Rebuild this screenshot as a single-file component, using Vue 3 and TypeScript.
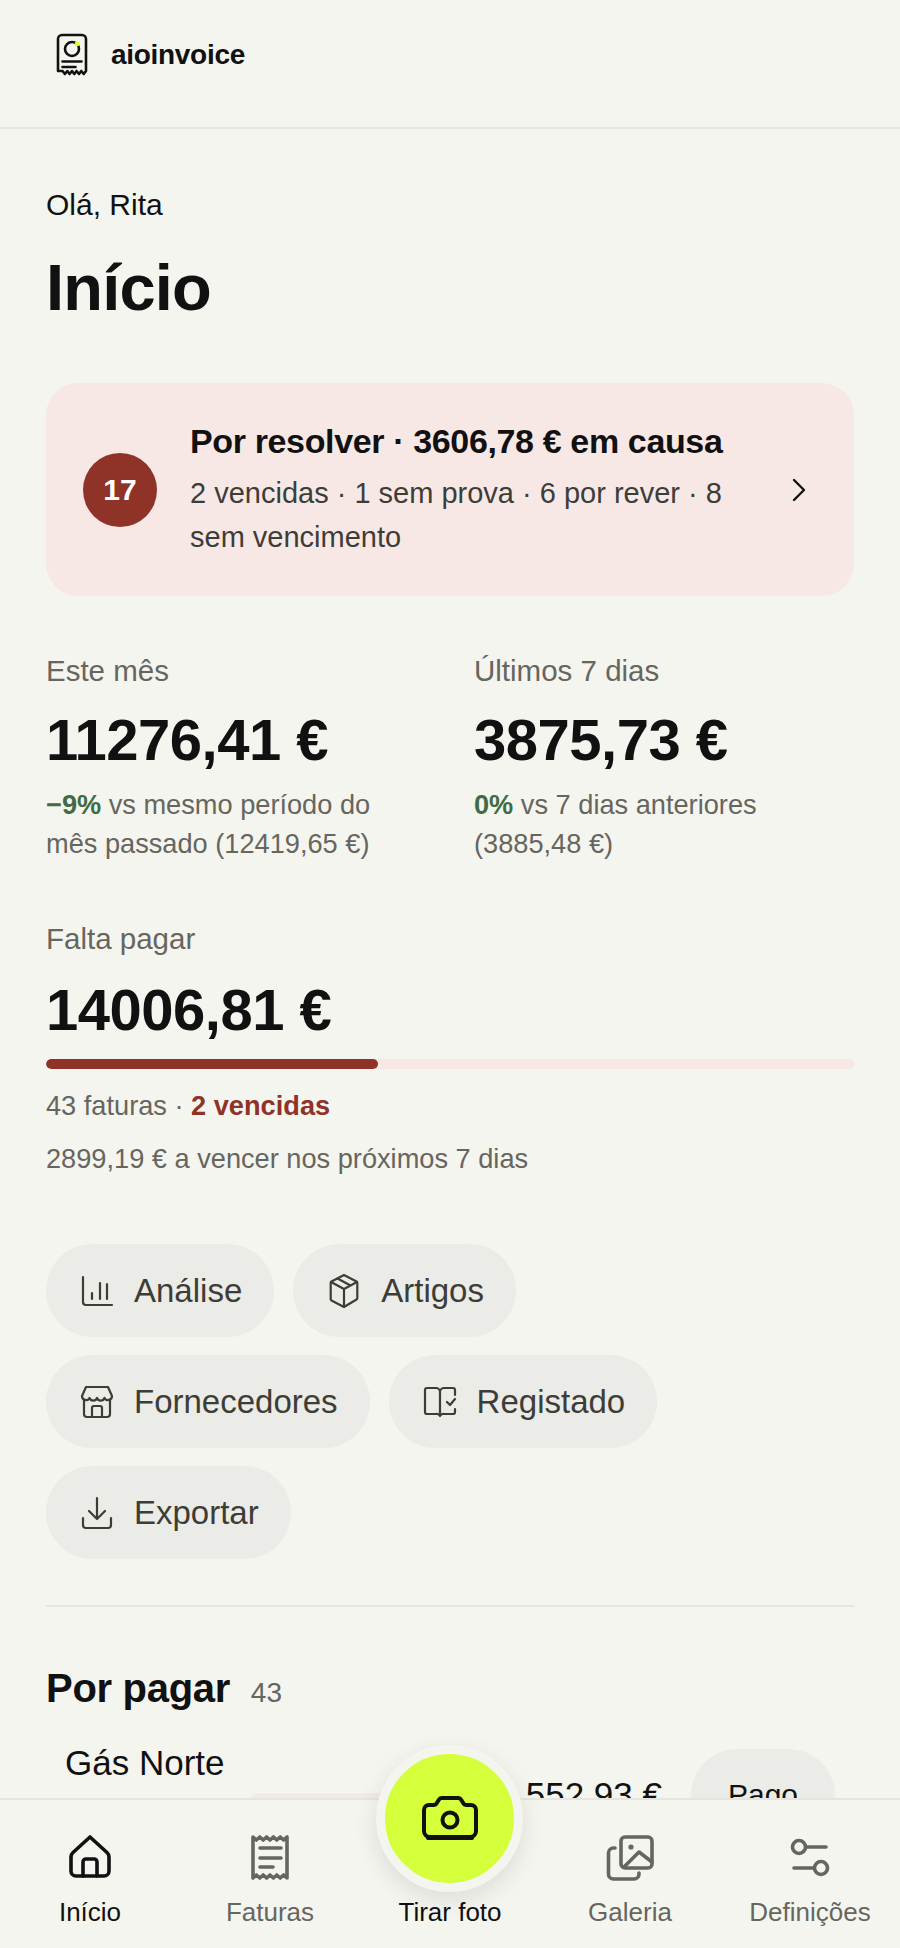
<script setup lang="ts">
const greeting: string = 'Olá, Rita'
</script>

<template>
  <div class="app">
    <header class="topbar">
      <svg class="logo" width="36" height="48" viewBox="0 0 36 48" fill="none" stroke="#111" stroke-width="2.600" stroke-linecap="round" stroke-linejoin="round">
        <path d="M4 40V8a4 4 0 0 1 4-4h20a4 4 0 0 1 4 4v32l-2.300 3-2.400-3-2.300 3-2.400-3-2.300 3-2.300-3-2.400 3-2.300-3-2.400 3-2.300-3z"/>
        <circle cx="18" cy="18" r="7"/>
        <path d="M8.500 30.500h19M8.500 36h13"/>
        <circle cx="23" cy="13" r="2.400" fill="#d4ff3a" stroke="none"/>
      </svg>
      <span class="brand">aioinvoice</span>
    </header>

    <main class="main">
      <p class="hello">{{ greeting }}</p>
      <h1 class="title">Início</h1>

      <section class="alert">
        <span class="alert-badge">17</span>
        <div class="alert-text">
          <div class="alert-title">Por resolver · 3606,78 € em causa</div>
          <div class="alert-sub">2 vencidas · 1 sem prova · 6 por rever · 8 sem vencimento</div>
        </div>
        <svg class="chev" width="16" height="26" viewBox="0 0 16 26" fill="none" stroke="#111" stroke-width="2.400" stroke-linecap="round" stroke-linejoin="round"><path d="M3 3l10 10-10 10"/></svg>
      </section>

      <section class="stats">
        <div>
          <div class="label">Este mês</div>
          <div class="value">11276,41 €</div>
          <div class="note"><b class="good">−9%</b> vs mesmo período do mês passado (12419,65 €)</div>
        </div>
        <div>
          <div class="label">Últimos 7 dias</div>
          <div class="value">3875,73 €</div>
          <div class="note"><b class="good">0%</b> vs 7 dias anteriores (3885,48 €)</div>
        </div>
      </section>

      <section class="due">
        <div class="label">Falta pagar</div>
        <div class="value">14006,81 €</div>
        <div class="track"><div class="fill"></div></div>
        <div class="note due-a">43 faturas · <b class="bad">2 vencidas</b></div>
        <div class="note due-b">2899,19 € a vencer nos próximos 7 dias</div>
      </section>

      <section class="actions">
        <button class="pill">
          <svg viewBox="-1 -2 34 36" fill="none" stroke="#3d3d38" stroke-width="2.200" stroke-linecap="round" stroke-linejoin="round"><path d="M2 2v25a3 3 0 0 0 3 3h26"/><path d="M11 18v6M19 8v16M26 9v15"/></svg>
          <span>Análise</span>
        </button>
        <button class="pill">
          <svg viewBox="-1 0 34 36" fill="none" stroke="#3d3d38" stroke-width="2.200" stroke-linecap="round" stroke-linejoin="round"><path d="M16 2l12.500 6.500a1.500 1.500 0 0 1 .8 1.300v15.400a1.500 1.500 0 0 1-.8 1.300L16 34 3.500 27.500a1.500 1.500 0 0 1-.8-1.300V9.800a1.500 1.500 0 0 1 .8-1.300z"/><path d="M3 9l13 7 13-7M16 16v18M9.500 5.500l13 7"/></svg>
          <span>Artigos</span>
        </button>
        <button class="pill">
          <svg viewBox="0 -1 34 36" fill="none" stroke="#3d3d38" stroke-width="2.200" stroke-linecap="round" stroke-linejoin="round"><path d="M6 2h22l4 9a4 4 0 0 1-7.500 2 4 4 0 0 1-7.500 0 4 4 0 0 1-7.500 0A4 4 0 0 1 2 11z"/><path d="M4 15v14a3 3 0 0 0 3 3h20a3 3 0 0 0 3-3V15"/><path d="M12 32V23a2 2 0 0 1 2-2h6a2 2 0 0 1 2 2v9"/></svg>
          <span>Fornecedores</span>
        </button>
        <button class="pill">
          <svg viewBox="0 -1 34 36" fill="none" stroke="#3d3d38" stroke-width="2.200" stroke-linecap="round" stroke-linejoin="round"><path d="M17 31V7a4 4 0 0 0-4-4H4a2 2 0 0 0-2 2v22a2 2 0 0 0 2 2h9a4 4 0 0 1 4 2 4 4 0 0 1 4-2h9a2 2 0 0 0 2-2v-3M32 10V5a2 2 0 0 0-2-2h-9a4 4 0 0 0-4 4"/><path d="M24 17l3 3 5-6"/></svg>
          <span>Registado</span>
        </button>
        <button class="pill">
          <svg viewBox="-1 -1 34 36" fill="none" stroke="#3d3d38" stroke-width="2.200" stroke-linecap="round" stroke-linejoin="round"><path d="M16 2v20M8 15l8 8 8-8"/><path d="M2 22v7a3 3 0 0 0 3 3h22a3 3 0 0 0 3-3v-7"/></svg>
          <span>Exportar</span>
        </button>
      </section>

      <hr class="rule" />

      <h2 class="list-head">Por pagar <span class="count">43</span></h2>

      <div class="row">
        <div class="row-main">
          <div class="row-name">Gás Norte</div>
          <div class="chip"></div>
        </div>
        <div class="row-amount">552,93 €</div>
        <button class="pay">Pago</button>
      </div>
    </main>

    <nav class="nav">
      <a class="tab active">
        <svg width="48" height="48" viewBox="0 0 48 48" fill="none" stroke="#111" stroke-width="3.600" stroke-linecap="round" stroke-linejoin="round"><path d="M24 4l17 15.500a6 6 0 0 1 2 4.500v14a5 5 0 0 1-5 5H10a5 5 0 0 1-5-5V24a6 6 0 0 1 2-4.500z"/><path d="M17 43V29a3 3 0 0 1 3-3h8a3 3 0 0 1 3 3v14"/></svg>
        <span>Início</span>
      </a>
      <a class="tab">
        <svg width="48" height="48" viewBox="0 0 48 48" fill="none" stroke="#66665f" stroke-width="3.600" stroke-linecap="round" stroke-linejoin="round"><path d="M7 4l3.400 3 3.400-3 3.400 3 3.400-3 3.400 3 3.400-3 3.400 3 3.400-3 3.400 3 3.400-3v41l-3.400-3-3.400 3-3.400-3-3.400 3-3.400-3-3.400 3-3.400-3-3.400 3-3.400-3-3.400 3z"/><path d="M14 15h21M14 25h21M14 34h13"/></svg>
        <span>Faturas</span>
      </a>
      <a class="tab active fab-tab">
        <span class="fab">
          <svg width="56" height="46" viewBox="0 0 56 46" fill="none" stroke="#111" stroke-width="4" stroke-linecap="round" stroke-linejoin="round"><path d="M7 10h5a3 3 0 0 0 2.500-1.500L17 4.500A3 3 0 0 1 19.500 3h17a3 3 0 0 1 2.500 1.500l2.500 4A3 3 0 0 0 44 10h5a5 5 0 0 1 5 5v21a6 6 0 0 1-6 6H8a6 6 0 0 1-6-6V15a5 5 0 0 1 5-5z"/><path d="M6 43h44"/><circle cx="28" cy="25" r="7.500"/></svg>
        </span>
        <span class="fab-label">Tirar foto</span>
      </a>
      <a class="tab">
        <svg width="48" height="48" viewBox="0 0 48 48" fill="none" stroke="#66665f" stroke-width="3.600" stroke-linecap="round" stroke-linejoin="round"><rect x="15" y="4" width="31" height="31" rx="4"/><circle cx="25" cy="14" r="2.600" fill="#66665f" stroke="none"/><path d="M18 34l15-15 13 10"/><path d="M9 15H7.500a5 5 0 0 0-5 5v21a5 5 0 0 0 5 5H28a5 5 0 0 0 5-5v-1"/></svg>
        <span>Galeria</span>
      </a>
      <a class="tab">
        <svg width="48" height="48" viewBox="0 0 48 48" fill="none" stroke="#66665f" stroke-width="3.600" stroke-linecap="round" stroke-linejoin="round"><circle cx="13" cy="14" r="6.500"/><path d="M21 14h19"/><circle cx="35" cy="35" r="6.500"/><path d="M8 35h20"/></svg>
        <span>Definições</span>
      </a>
    </nav>
  </div>
</template>

<style scoped>
.app {
  height: 1948px;
  display: flex;
  flex-direction: column;
  overflow: hidden;
  background: #f5f5f0;
  color: #111;
  font-family: "Liberation Sans", Arial, sans-serif;
}
.topbar {
  height: 129px;
  flex: none;
  box-sizing: border-box;
  display: flex;
  align-items: center;
  gap: 21px;
  padding: 0 0 18px 54px;
  border-bottom: 2px solid #e5e5e0;
}
.brand { font-size: 28px; font-weight: 700; letter-spacing: -0.3px; }
.main {
  flex: 1;
  min-height: 0;
  overflow: hidden;
  padding: 0 46px;
}
.hello { margin: 57px 0 0; font-size: 30px; line-height: 38px; }
.title { margin: 26px 0 0; font-size: 65px; line-height: 76px; font-weight: 700; letter-spacing: -0.8px; }
.alert {
  margin-top: 57px;
  height: 213px;
  box-sizing: border-box;
  border-radius: 32px;
  background: #f7e8e6;
  display: flex;
  align-items: center;
  padding: 0 47px 0 37px;
}
.alert-badge {
  flex: none;
  width: 74px;
  height: 74px;
  border-radius: 50%;
  background: #8f3228;
  color: #fff;
  font-size: 30px;
  font-weight: 700;
  display: flex;
  align-items: center;
  justify-content: center;
}
.alert-text { flex: 1; margin: -2px 0 0 33px; }
.alert-title { font-size: 34px; line-height: 44px; font-weight: 700; letter-spacing: -0.36px; }
.alert-sub { margin-top: 8px; font-size: 29px; line-height: 44px; color: #3d3d38; }
.chev { flex: none; margin-left: 30px; }
.stats {
  margin-top: 55px;
  display: grid;
  grid-template-columns: 1fr 1fr;
  column-gap: 48px;
}
.label { font-size: 29.500px; line-height: 40px; color: #66665f; }
.value { margin-top: 16px; font-size: 58px; line-height: 66px; font-weight: 700; letter-spacing: -0.500px; }
.note { font-size: 27.200px; line-height: 39px; color: #66665f; }
.stats .note { margin-top: 12px; }
.good { color: #3f6b45; }
.bad { color: #8f3228; }
.due { margin-top: 56px; }
.due .value { margin-top: 18px; }
.track {
  margin-top: 16px;
  height: 10px;
  border-radius: 5px;
  background: #f7e8e6;
  overflow: hidden;
}
.fill { width: 41.100%; height: 100%; border-radius: 5px; background: #8f3228; }
.due-a { margin-top: 17px; }
.due-b { margin-top: 14px; }
.actions {
  margin-top: 66px;
  display: flex;
  flex-wrap: wrap;
  gap: 18px 19px;
}
.pill {
  height: 93px;
  border: none;
  border-radius: 47px;
  background: #ebebe7;
  color: #3d3d38;
  font: inherit;
  font-size: 33px;
  padding: 0 32px 0 34px;
  display: flex;
  align-items: center;
  gap: 20px;
}
.pill svg { flex: none; width: 34px; height: 36px; overflow: visible; }
.rule { margin: 46px 0 0; border: none; height: 2px; background: #e5e5e0; }
.list-head { margin: 56px 0 0; font-size: 40px; line-height: 50px; font-weight: 700; letter-spacing: -0.300px; }
.count { margin-left: 10px; font-size: 28px; font-weight: 400; color: #66665f; letter-spacing: 0; }
.row {
  margin-top: 24px;
  padding: 0 19px;
  display: flex;
  align-items: center;
  gap: 29px;
}
.row-main { flex: 1; min-width: 0; height: 106px; }
.row-name { font-size: 35px; line-height: 42px; }
.chip { margin: 9px 0 0 182px; height: 55px; width: 180px; border-radius: 14px; background: #f7e8e6; }
.row-amount { font-size: 35px; line-height: 42px; }
.pay {
  width: 144px;
  height: 93px;
  border: none;
  border-radius: 47px;
  background: #ebebe7;
  color: #111;
  font: inherit;
  font-size: 30px;
}
.nav {
  position: relative;
  flex: none;
  height: 150px;
  box-sizing: border-box;
  border-top: 2px solid #e5e5e0;
  background: #f5f5f0;
  display: grid;
  grid-template-columns: repeat(5, 1fr);
}
.tab {
  position: relative;
  display: flex;
  flex-direction: column;
  align-items: center;
  padding-top: 33px;
  font-size: 26px;
  line-height: 30px;
  color: #66665f;
}
.tab svg { flex: none; }
.tab span { margin-top: 16px; }
.tab.active { color: #111; }
.tab .fab {
  position: absolute;
  top: -55px;
  left: 50%;
  margin: 0 0 0 -74px;
  width: 129px;
  height: 129px;
  border: 9.500px solid #f5f5f0;
  border-radius: 50%;
  background: #d4ff3a;
  box-shadow: 0 8px 24px rgba(0, 0, 0, 0.10);
  display: flex;
  align-items: center;
  justify-content: center;
}
.fab svg { margin-top: -2px; }
.tab .fab-label { margin-top: 64px; }
</style>

<style>
html, body { margin: 0; background: #f5f5f0; }
</style>
